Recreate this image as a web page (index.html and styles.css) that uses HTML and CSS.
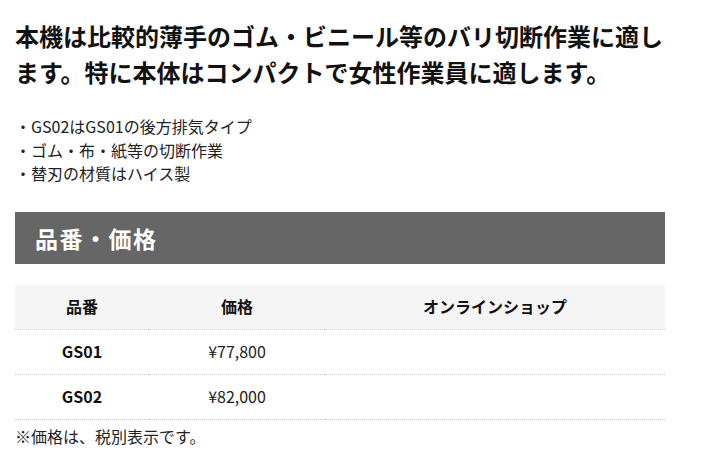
FILE: index.html
```html
<!DOCTYPE html>
<html lang="ja">
<head>
<meta charset="utf-8">
<title>GS01 / GS02</title>
<link rel="stylesheet" href="styles.css">
</head>
<body>
<main class="page">
  <h1 class="lead">本機は比較的薄手のゴム・ビニール等のバリ切断作業に適します。特に本体はコンパクトで女性作業員に適します。</h1>
  <ul class="features">
    <li>・GS02はGS01の後方排気タイプ</li>
    <li>・ゴム・布・紙等の切断作業</li>
    <li>・替刃の材質はハイス製</li>
  </ul>
  <h2 class="section-title">品番・価格</h2>
  <table class="price-table">
    <colgroup>
      <col class="c-code">
      <col class="c-price">
      <col class="c-shop">
    </colgroup>
    <thead>
      <tr><th>品番</th><th>価格</th><th>オンラインショップ</th></tr>
    </thead>
    <tbody>
      <tr><td class="code">GS01</td><td>¥77,800</td><td></td></tr>
      <tr><td class="code">GS02</td><td>¥82,000</td><td></td></tr>
    </tbody>
  </table>
  <p class="note">※価格は、税別表示です。</p>
</main>
</body>
</html>
```
FILE: styles.css
```css
html, body {
  margin: 0;
  padding: 0;
  background: #fff;
}
body {
  font-family: "Noto Sans CJK JP", "Noto Sans", sans-serif;
  color: #222;
}
.page {
  width: 650px;
  padding: 18px 15px 0;
}
.lead {
  margin: 0;
  font-size: 24px;
  line-height: 36px;
  font-weight: bold;
  color: #111;
}
.features {
  list-style: none;
  margin: 25px 0 0;
  padding: 0;
  font-size: 16px;
  line-height: 23.5px;
}
.section-title {
  margin: 26px 0 0;
  height: 52px;
  padding: 0 20px;
  background: #666;
  color: #fff;
  font-size: 23px;
  line-height: 52px;
  font-weight: bold;
  letter-spacing: 1.5px;
}
.price-table {
  margin-top: 21px;
  width: 650px;
  border-collapse: collapse;
  table-layout: fixed;
  font-size: 16px;
}
.c-code { width: 134px; }
.c-price { width: 176px; }
.c-shop { width: 340px; }
.price-table th,
.price-table td {
  height: 44px;
  padding: 0 0 2px;
  text-align: center;
  vertical-align: middle;
  border-bottom: 1px dotted #c8c8c8;
}
.price-table th {
  height: 42px;
  background: #f5f5f5;
  font-weight: bold;
  color: #111;
}
.price-table td {
  height: 42px;
}
.price-table td.code {
  font-weight: bold;
  color: #111;
}
.note {
  margin: 4px 0 0;
  font-size: 16px;
  line-height: 24px;
}
```
